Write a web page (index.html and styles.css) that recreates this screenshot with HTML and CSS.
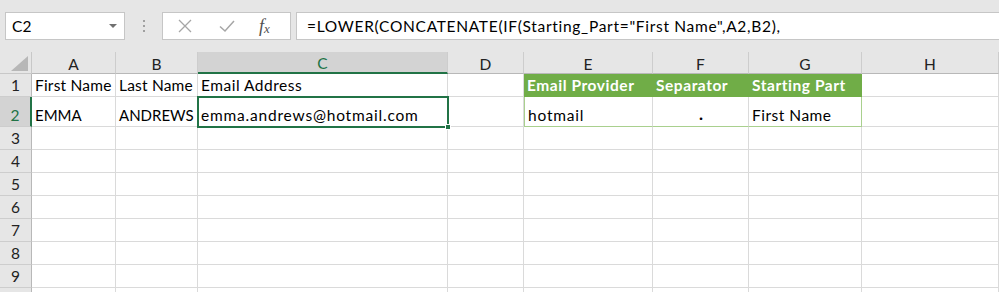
FILE: index.html
```html
<!DOCTYPE html>
<html>
<head>
<meta charset="utf-8">
<link rel="stylesheet" href="styles.css">
</head>
<body>
<div class="app">
  <div class="fbar">
    <div class="namebox">
      <span class="nb-text">C2</span>
      <svg class="nb-arrow" width="8" height="4" viewBox="0 0 8 4"><path d="M0 0H8L4 4Z" fill="#707070"/></svg>
    </div>
    <div class="dots"><i></i><i></i><i></i></div>
    <div class="btns">
      <svg class="ico" width="16" height="16" viewBox="0 0 16 16"><path d="M2 2L14 14M14 2L2 14" stroke="#a6a6a6" stroke-width="1.3" fill="none"/></svg>
      <svg class="ico" width="18" height="16" viewBox="0 0 18 16"><path d="M2 8.5L7 13L16 3" stroke="#a6a6a6" stroke-width="1.5" fill="none"/></svg>
      <span class="fx">f<sub>x</sub></span>
    </div>
    <div class="formula">=LOWER(CONCATENATE(IF(Starting_Part="First Name",A2,B2),</div>
  </div>
  <div class="grid">
    <div class="corner"><svg width="17" height="15" viewBox="0 0 17 15"><path d="M17 0V15H0Z" fill="#b7b7b7"/></svg></div>
    <div class="ch">A</div>
    <div class="ch">B</div>
    <div class="ch sel">C</div>
    <div class="ch">D</div>
    <div class="ch">E</div>
    <div class="ch">F</div>
    <div class="ch">G</div>
    <div class="ch">H</div>

    <div class="rh">1</div>
    <div class="c">First Name</div>
    <div class="c">Last Name</div>
    <div class="c wide1">Email Address</div>
    <div class="c"></div>
    <div class="c th">Email Provider</div>
    <div class="c th">Separator</div>
    <div class="c th">Starting Part</div>
    <div class="c"></div>

    <div class="rh rsel">2</div>
    <div class="c caps">EMMA</div>
    <div class="c caps">ANDREWS</div>
    <div class="c active wide2">emma.andrews@hotmail.com<span class="handle"></span></div>
    <div class="c"></div>
    <div class="c td tdl wide2">hotmail</div>
    <div class="c td center"><b class="dot">.</b></div>
    <div class="c td tdr wide1">First Name</div>
    <div class="c"></div>

    <div class="rh">3</div><div class="c"></div><div class="c"></div><div class="c"></div><div class="c"></div><div class="c"></div><div class="c"></div><div class="c"></div><div class="c"></div>
    <div class="rh">4</div><div class="c"></div><div class="c"></div><div class="c"></div><div class="c"></div><div class="c"></div><div class="c"></div><div class="c"></div><div class="c"></div>
    <div class="rh">5</div><div class="c"></div><div class="c"></div><div class="c"></div><div class="c"></div><div class="c"></div><div class="c"></div><div class="c"></div><div class="c"></div>
    <div class="rh">6</div><div class="c"></div><div class="c"></div><div class="c"></div><div class="c"></div><div class="c"></div><div class="c"></div><div class="c"></div><div class="c"></div>
    <div class="rh">7</div><div class="c"></div><div class="c"></div><div class="c"></div><div class="c"></div><div class="c"></div><div class="c"></div><div class="c"></div><div class="c"></div>
    <div class="rh">8</div><div class="c"></div><div class="c"></div><div class="c"></div><div class="c"></div><div class="c"></div><div class="c"></div><div class="c"></div><div class="c"></div>
    <div class="rh">9</div><div class="c"></div><div class="c"></div><div class="c"></div><div class="c"></div><div class="c"></div><div class="c"></div><div class="c"></div><div class="c"></div>
    <div class="rh"></div><div class="c"></div><div class="c"></div><div class="c"></div><div class="c"></div><div class="c"></div><div class="c"></div><div class="c"></div><div class="c"></div>
  </div>
</div>
</body>
</html>
```
FILE: styles.css
```css
* { box-sizing: border-box; }
html, body { margin: 0; padding: 0; }
body {
  width: 999px;
  height: 292px;
  overflow: hidden;
  background: #ffffff;
  font-family: Lato, "Open Sans", sans-serif;
  font-size: 15.5px;
  letter-spacing: 0.2px;
  color: #000;
}
.app { width: 999px; height: 292px; overflow: hidden; }
.fbar {
  background: #e6e6e6;
  height: 52px;
  padding-top: 12px;
  display: flex;
  align-items: flex-start;
}
.namebox {
  margin-left: 5px;
  width: 120px;
  height: 28px;
  background: #fff;
  border: 1px solid #c6c6c6;
  display: flex;
  align-items: center;
  justify-content: space-between;
  padding: 0 7px 0 6px;
}
.nb-text { font-size: 15.5px; color: #000; }
.dots {
  width: 37px;
  height: 28px;
  display: flex;
  flex-direction: column;
  align-items: center;
  justify-content: center;
  gap: 3px;
}
.dots i {
  display: block;
  width: 2px;
  height: 2px;
  background: #a0a0a0;
}
.btns {
  width: 129px;
  height: 28px;
  background: #fff;
  border: 1px solid #c6c6c6;
  display: flex;
  align-items: center;
  padding-left: 14px;
  gap: 25px;
}
.fx {
  font-family: "Liberation Serif", "DejaVu Serif", serif;
  font-style: italic;
  font-size: 18px;
  color: #505050;
  margin-left: -2px;
  line-height: 1;
  letter-spacing: 0;
}
.fx sub { font-size: 13px; vertical-align: -1px; }
.formula {
  margin-left: 5px;
  flex: 1;
  height: 28px;
  background: #fff;
  border: 1px solid #c6c6c6;
  border-right: none;
  display: flex;
  align-items: center;
  padding-left: 10px;
  font-size: 15.5px;
  letter-spacing: 0.7px;
  white-space: nowrap;
}
.grid {
  display: grid;
  grid-template-columns: 32px 84px 82px 250px 76px 129px 96px 113px 137px;
  grid-template-rows: 22px 23px 30px repeat(8, 23px);
}
.corner {
  background: #e6e6e6;
  border-right: 1px solid #c8c8c8;
  border-bottom: 1px solid #c8c8c8;
  display: flex;
  align-items: flex-end;
  justify-content: flex-end;
  padding: 0 3px 2px 0;
}
.ch {
  background: #e6e6e6;
  border-right: 1px solid #cdcdcd;
  border-bottom: 1px solid #b8b8b8;
  display: flex;
  align-items: center;
  justify-content: center;
  color: #222;
  padding-top: 2px;
}
.ch.sel {
  background: #d3d3d3;
  border-bottom: 2px solid #217346;
  color: #217346;
}
.rh {
  background: #e6e6e6;
  border-right: 1px solid #b8b8b8;
  border-bottom: 1px solid #cdcdcd;
  display: flex;
  align-items: flex-end;
  justify-content: center;
  padding-bottom: 2px;
  color: #222;
}
.rh.rsel {
  background: #d3d3d3;
  border-right: 2px solid #217346;
  color: #217346;
}
.c {
  border-right: 1px solid #dadada;
  border-bottom: 1px solid #dadada;
  display: flex;
  align-items: flex-end;
  padding: 0 2px 2px 3px;
  white-space: nowrap;
  overflow: visible;
  position: relative;
}
.caps { font-size: 15px; letter-spacing: 0; padding-right: 0; }
.wide1 { letter-spacing: 0.5px; }
.wide2 { letter-spacing: 0.8px; }
.th {
  background: #70ad47;
  color: #fff;
  font-weight: 700;
  letter-spacing: 0.55px;
  border-right-color: #70ad47;
  border-bottom-color: #70ad47;
}
.td { border-bottom: 1px solid #a9d08e; border-right-color: #dadada; }
.tdl { border-left: 1px solid #a9d08e; }
.tdr { border-right: 1px solid #a9d08e; }
.center { justify-content: center; }
.dot { font-size: 17px; }
.active {
  outline: 2px solid #217346;
  outline-offset: -1px;
  z-index: 2;
}
.handle {
  position: absolute;
  right: -4px;
  bottom: -4px;
  width: 6px;
  height: 6px;
  background: #217346;
  border: 1px solid #fff;
}
```
